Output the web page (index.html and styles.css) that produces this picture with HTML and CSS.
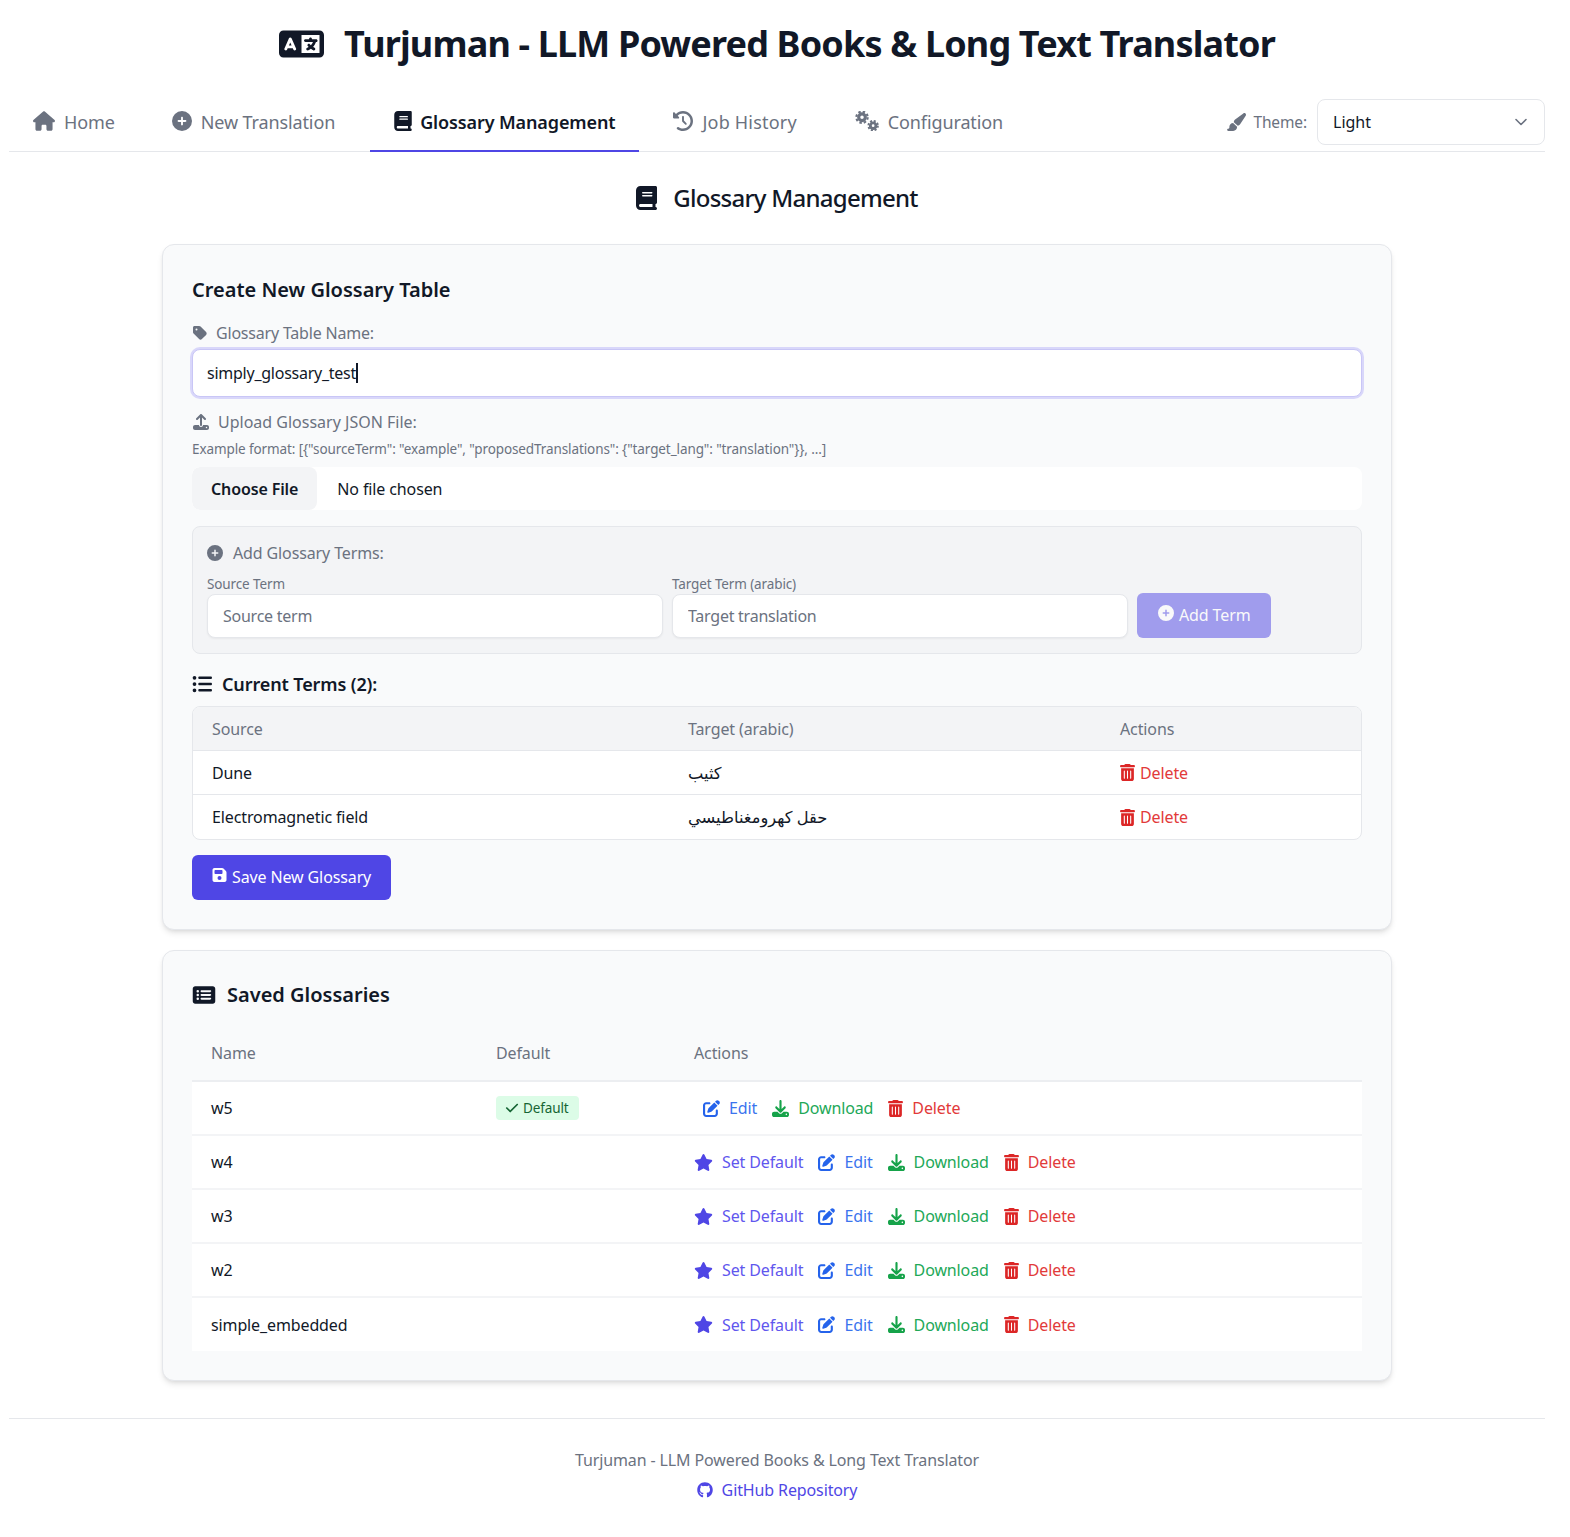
FILE: index.html
```html
<!DOCTYPE html>
<html lang="en">
    <head>
        <meta charset="UTF-8">
        <meta name="viewport" content="width=device-width, initial-scale=1.0">
        <title>Turjuman - LLM Powered Books &amp; Long Text Translator</title>
        <link rel="stylesheet" href="styles.css">
    </head>
    <body>
        <!--Icon sprite-->
        <svg class="sprite" xmlns="http://www.w3.org/2000/svg">
            <symbol id="i-language" viewBox="0 0 640 512"><path d="M0 128C0 92.7 28.7 64 64 64H256h48 16H576c35.3 0 64 28.7 64 64V384c0 35.3-28.7 64-64 64H320 304 256 64c-35.3 0-64-28.7-64-64V128zm320 0V384H576V128H320zM178.3 175.9c-3.2-7.2-10.4-11.9-18.3-11.9s-15.1 4.7-18.3 11.9l-64 144c-4.5 10.1 .1 21.9 10.2 26.4s21.9-.1 26.4-10.2l8.9-20.1h73.6l8.9 20.1c4.5 10.1 16.3 14.6 26.4 10.2s14.6-16.3 10.2-26.4l-64-144zM160 233.2L179 276H141l19-42.8zM448 164c11 0 20 9 20 20v4h44 16c11 0 20 9 20 20s-9 20-20 20h-2l-1.6 4.5c-8.9 24.4-22.4 46.6-39.6 65.4c.9 .6 1.8 1.1 2.7 1.6l18.9 11.3c9.5 5.7 12.5 18 6.9 27.4s-18 12.5-27.4 6.9l-18.9-11.3c-4.5-2.7-8.8-5.5-13.1-8.5c-10.6 7.5-21.9 14-34 19.4l-3.6 1.6c-10.1 4.5-21.9-.1-26.4-10.2s.1-21.9 10.2-26.4l3.6-1.6c6.4-2.9 12.6-6.1 18.5-9.8l-12.2-12.2c-7.8-7.8-7.8-20.5 0-28.3s20.5-7.8 28.3 0l14.6 14.6 .5 .5c12.4-13.1 22.5-28.3 29.8-45H448 376c-11 0-20-9-20-20s9-20 20-20h52v-4c0-11 9-20 20-20z"/></symbol>
            <symbol id="i-house" viewBox="0 0 576 512"><path d="M575.8 255.5c0 18-15 32.1-32 32.1h-32l.7 160.2c0 2.7-.2 5.4-.5 8.1V472c0 22.1-17.9 40-40 40H456c-1.1 0-2.2 0-3.3-.1c-1.4 .1-2.8 .1-4.2 .1H416 392c-22.1 0-40-17.9-40-40V448 384c0-17.7-14.3-32-32-32H256c-17.7 0-32 14.3-32 32v64 24c0 22.1-17.9 40-40 40H160 128.1c-1.5 0-3-.1-4.5-.2c-1.2 .1-2.4 .2-3.6 .2H104c-22.1 0-40-17.9-40-40V360c0-.9 0-1.9 .1-2.8V287.6H32c-18 0-32-14-32-32.1c0-9 3-17 10-24L266.4 8c7-7 15-8 22-8s15 2 21 7L564.8 231.5c8 7 12 15 11 24z"/></symbol>
            <symbol id="i-plus" viewBox="0 0 512 512"><path d="M256 512A256 256 0 1 0 256 0a256 256 0 1 0 0 512zM232 344V280H168c-13.3 0-24-10.7-24-24s10.7-24 24-24h64V168c0-13.3 10.7-24 24-24s24 10.7 24 24v64h64c13.3 0 24 10.7 24 24s-10.7 24-24 24H280v64c0 13.3-10.7 24-24 24s-24-10.7-24-24z"/></symbol>
            <symbol id="i-book" viewBox="0 0 448 512"><path d="M96 0C43 0 0 43 0 96V416c0 53 43 96 96 96H384h32c17.7 0 32-14.3 32-32s-14.3-32-32-32V384c17.7 0 32-14.3 32-32V32c0-17.7-14.3-32-32-32H384 96zm0 384H352v64H96c-17.7 0-32-14.3-32-32s14.3-32 32-32zm32-240c0-8.8 7.2-16 16-16H336c8.8 0 16 7.2 16 16s-7.2 16-16 16H144c-8.8 0-16-7.2-16-16zm16 48H336c8.8 0 16 7.2 16 16s-7.2 16-16 16H144c-8.8 0-16-7.2-16-16s7.2-16 16-16z"/></symbol>
            <symbol id="i-history" viewBox="0 0 512 512"><path d="M75 75L41 41C25.9 25.9 0 36.6 0 57.9V168c0 13.3 10.7 24 24 24H134.1c21.4 0 32.1-25.9 17-41l-30.8-30.8C155 85.5 203 64 256 64c106 0 192 86 192 192s-86 192-192 192c-40.8 0-78.6-12.7-109.7-34.4c-14.5-10.1-34.4-6.6-44.6 7.9s-6.6 34.4 7.9 44.6C151.2 495 201.7 512 256 512c141.4 0 256-114.6 256-256S397.4 0 256 0C185.3 0 121.3 28.7 75 75zm181 53c-13.3 0-24 10.7-24 24V256c0 6.4 2.5 12.5 7 17l72 72c9.4 9.4 24.6 9.4 33.9 0s9.4-24.6 0-33.9l-65-65V152c0-13.3-10.7-24-24-24z"/></symbol>
            <symbol id="i-gears" viewBox="0 0 640 512"><g fill="none" stroke="currentColor"><circle cx="205" cy="160" r="85" stroke-width="80"/><circle cx="205" cy="160" r="145" stroke-width="54" stroke-dasharray="62 52"/><circle cx="490" cy="375" r="72" stroke-width="74"/><circle cx="490" cy="375" r="122" stroke-width="48" stroke-dasharray="52 44"/></g></symbol>
            <symbol id="i-brush" viewBox="0 0 576 512"><path d="M339.3 367.1c27.3-3.9 51.9-19.4 67.2-42.9L568.2 74.1c12.6-19.5 9.4-45.3-7.6-61.2S517.7-4.4 499.1 9.6L262.4 187.2c-24 18-38.2 46.1-38.4 76.1L339.3 367.1zm-19.6 25.4l-116-104.4C143.9 290.3 96 339.6 96 400c0 3.9 .2 7.8 .6 11.6C98.4 429.1 86.4 448 68.8 448H64c-17.7 0-32 14.3-32 32s14.3 32 32 32H208c61.9 0 112-50.1 112-112c0-2.5-.1-5-.2-7.5z"/></symbol>
            <symbol id="i-tag" viewBox="0 0 448 512"><path d="M0 80V229.5c0 17 6.7 33.3 18.7 45.3l176 176c25 25 65.5 25 90.5 0L418.7 317.3c25-25 25-65.5 0-90.5l-176-176c-12-12-28.3-18.7-45.3-18.7H48C21.5 32 0 53.5 0 80zm112 32a32 32 0 1 1 0 64 32 32 0 1 1 0-64z"/></symbol>
            <symbol id="i-upload" viewBox="0 0 512 512"><path d="M288 109.3V352c0 17.7-14.3 32-32 32s-32-14.3-32-32V109.3l-73.4 73.4c-12.5 12.5-32.8 12.5-45.3 0s-12.5-32.8 0-45.3l128-128c12.5-12.5 32.8-12.5 45.3 0l128 128c12.5 12.5 12.5 32.8 0 45.3s-32.8 12.5-45.3 0L288 109.3zM64 352H192c0 35.3 28.7 64 64 64s64-28.7 64-64H448c35.3 0 64 28.7 64 64v32c0 35.3-28.7 64-64 64H64c-35.3 0-64-28.7-64-64V416c0-35.3 28.7-64 64-64zM432 456a24 24 0 1 0 0-48 24 24 0 1 0 0 48z"/></symbol>
            <symbol id="i-download" viewBox="0 0 512 512"><path d="M288 32c0-17.7-14.3-32-32-32s-32 14.3-32 32V274.7l-73.4-73.4c-12.5-12.5-32.8-12.5-45.3 0s-12.5 32.8 0 45.3l128 128c12.5 12.5 32.8 12.5 45.3 0l128-128c12.5-12.5 12.5-32.8 0-45.3s-32.8-12.5-45.3 0L288 274.7V32zM64 352c-35.3 0-64 28.7-64 64v32c0 35.3 28.7 64 64 64H448c35.3 0 64-28.7 64-64V416c0-35.3-28.7-64-64-64H346.5l-45.3 45.3c-25 25-65.5 25-90.5 0L165.5 352H64zm368 56a24 24 0 1 1 0 48 24 24 0 1 1 0-48z"/></symbol>
            <symbol id="i-list" viewBox="0 0 512 512"><path d="M64 144a48 48 0 1 0 0-96 48 48 0 1 0 0 96zM192 64c-17.7 0-32 14.3-32 32s14.3 32 32 32H480c17.7 0 32-14.3 32-32s-14.3-32-32-32H192zm0 160c-17.7 0-32 14.3-32 32s14.3 32 32 32H480c17.7 0 32-14.3 32-32s-14.3-32-32-32H192zm0 160c-17.7 0-32 14.3-32 32s14.3 32 32 32H480c17.7 0 32-14.3 32-32s-14.3-32-32-32H192zM64 464a48 48 0 1 0 0-96 48 48 0 1 0 0 96zm48-208a48 48 0 1 0 -96 0 48 48 0 1 0 96 0z"/></symbol>
            <symbol id="i-rect-list" viewBox="0 0 576 512"><path d="M0 96C0 60.7 28.7 32 64 32H512c35.3 0 64 28.7 64 64V416c0 35.3-28.7 64-64 64H64c-35.3 0-64-28.7-64-64V96zM128 288a32 32 0 1 0 0-64 32 32 0 1 0 0 64zm32-128a32 32 0 1 0 -64 0 32 32 0 1 0 64 0zM128 384a32 32 0 1 0 0-64 32 32 0 1 0 0 64zm96-248c-13.3 0-24 10.7-24 24s10.7 24 24 24H448c13.3 0 24-10.7 24-24s-10.7-24-24-24H224zm0 96c-13.3 0-24 10.7-24 24s10.7 24 24 24H448c13.3 0 24-10.7 24-24s-10.7-24-24-24H224zm0 96c-13.3 0-24 10.7-24 24s10.7 24 24 24H448c13.3 0 24-10.7 24-24s-10.7-24-24-24H224z"/></symbol>
            <symbol id="i-trash" viewBox="0 0 448 512"><path d="M135.2 17.7C140.6 6.8 151.7 0 163.8 0H284.2c12.1 0 23.2 6.8 28.6 17.7L320 32h96c17.7 0 32 14.3 32 32s-14.3 32-32 32H32C14.3 96 0 81.7 0 64S14.3 32 32 32h96l7.2-14.3zM32 128H416V448c0 35.3-28.7 64-64 64H96c-35.3 0-64-28.7-64-64V128zm96 64c-8.8 0-16 7.2-16 16V432c0 8.8 7.2 16 16 16s16-7.2 16-16V208c0-8.8-7.2-16-16-16zm96 0c-8.8 0-16 7.2-16 16V432c0 8.8 7.2 16 16 16s16-7.2 16-16V208c0-8.8-7.2-16-16-16zm96 0c-8.8 0-16 7.2-16 16V432c0 8.8 7.2 16 16 16s16-7.2 16-16V208c0-8.8-7.2-16-16-16z"/></symbol>
            <symbol id="i-edit" viewBox="0 0 512 512"><path d="M471.6 21.7c-21.9-21.9-57.3-21.9-79.2 0L362.3 51.7l97.9 97.9 30.1-30.1c21.9-21.9 21.9-57.3 0-79.2L471.6 21.7zm-299.2 220c-6.1 6.1-10.8 13.6-13.5 21.9l-29.6 88.8c-2.9 8.6-.6 18.1 5.8 24.6s15.9 8.7 24.6 5.8l88.8-29.6c8.2-2.7 15.7-7.4 21.9-13.5L437.7 172.3 339.7 74.3 172.4 241.7zM96 64C43 64 0 107 0 160V416c0 53 43 96 96 96H352c53 0 96-43 96-96V320c0-17.7-14.3-32-32-32s-32 14.3-32 32v96c0 17.7-14.3 32-32 32H96c-17.7 0-32-14.3-32-32V160c0-17.7 14.3-32 32-32h96c17.7 0 32-14.3 32-32s-14.3-32-32-32H96z"/></symbol>
            <symbol id="i-save" viewBox="0 0 448 512"><path d="M64 32C28.7 32 0 60.7 0 96V416c0 35.3 28.7 64 64 64H384c35.3 0 64-28.7 64-64V173.3c0-17-6.7-33.3-18.7-45.3L352 50.7C340 38.7 323.7 32 306.7 32H64zm0 96c0-17.7 14.3-32 32-32H288c17.7 0 32 14.3 32 32v64c0 17.7-14.3 32-32 32H96c-17.7 0-32-14.3-32-32V128zM224 288a64 64 0 1 1 0 128 64 64 0 1 1 0-128z"/></symbol>
            <symbol id="i-check" viewBox="0 0 448 512"><path d="M438.6 105.4c12.5 12.5 12.5 32.8 0 45.3l-256 256c-12.5 12.5-32.8 12.5-45.3 0l-128-128c-12.5-12.5-12.5-32.8 0-45.3s32.8-12.5 45.3 0L160 338.7 393.4 105.4c12.5-12.5 32.8-12.5 45.3 0z"/></symbol>
            <symbol id="i-star" viewBox="0 0 576 512"><path d="M316.9 18C311.6 7 300.4 0 288.1 0s-23.4 7-28.8 18L195 150.3 51.4 171.5c-12 1.8-22 10.2-25.7 21.7s-.7 24.2 7.9 32.7L137.8 329 113.2 474.7c-2 12 3 24.2 12.9 31.3s23 8 33.8 2.3l128.3-68.5 128.3 68.5c10.8 5.7 23.9 4.9 33.8-2.3s14.9-19.3 12.9-31.3L438.5 329 542.7 225.9c8.6-8.5 11.7-21.2 7.9-32.7s-13.7-19.9-25.7-21.7L381.2 150.3 316.9 18z"/></symbol>
            <symbol id="i-github" viewBox="0 0 496 512"><path d="M165.9 397.4c0 2-2.3 3.6-5.2 3.6-3.3 0-5.6-1.6-5.6-3.6 0-2 2.3-3.6 5.2-3.6 3-.3 5.6 1.3 5.6 3.6zm-31.1-4.5c-.7 2 1.3 4.3 4.3 4.9 2.6 1 5.6 0 6.2-2s-1.3-4.3-4.3-5.2c-2.6-.7-5.5.3-6.2 2.3zm44.2-1.7c-2.9.7-4.9 2.6-4.6 4.9.3 2 2.9 3.3 5.9 2.6 2.9-.7 4.9-2.6 4.6-4.6-.3-1.9-3-3.2-5.9-2.9zM244.8 8C106.1 8 0 113.3 0 252c0 110.9 69.8 205.8 169.5 239.2 12.8 2.3 17.3-5.6 17.3-12.1 0-6.2-.3-40.4-.3-61.4 0 0-70 15-84.7-29.8 0 0-11.4-29.1-27.8-36.6 0 0-22.9-15.7 1.6-15.4 0 0 24.9 2 38.6 25.8 21.9 38.6 58.6 27.5 72.9 20.9 2.3-16 8.8-27.1 16-33.7-55.9-6.2-112.3-14.3-112.3-110.5 0-27.5 7.6-41.3 23.6-58.9-2.6-6.5-11.1-33.3 2.6-67.9 20.9-6.5 69 27 69 27 20-5.6 41.5-8.5 62.8-8.5s42.8 2.9 62.8 8.5c0 0 48.1-33.6 69-27 13.7 34.7 5.2 61.4 2.6 67.9 16 17.7 25.8 31.5 25.8 58.9 0 96.5-58.9 104.2-114.8 110.5 9.2 7.9 17 22.9 17 46.4 0 33.7-.3 75.4-.3 83.6 0 6.5 4.6 14.4 17.3 12.1C428.2 457.8 496 362.9 496 252 496 113.3 383.5 8 244.8 8z"/></symbol>
        </svg>

        <header class="pageHeader">
            <h1 class="pageTitle"><svg class="icoTitle"><use href="#i-language"/></svg>Turjuman - LLM Powered Books &amp; Long Text Translator</h1>
        </header>

        <!--Tabs-->
        <nav class="tabs">
            <a class="tab"><svg class="tabIco tabIcoHouse"><use href="#i-house"/></svg>Home</a>
            <a class="tab"><svg class="tabIco"><use href="#i-plus"/></svg>New Translation</a>
            <a class="tab tabActive"><svg class="tabIco tabIcoBook"><use href="#i-book"/></svg>Glossary Management</a>
            <a class="tab tabJob"><svg class="tabIco"><use href="#i-history"/></svg>Job History</a>
            <a class="tab"><svg class="tabIco tabIcoGears"><use href="#i-gears"/></svg>Configuration</a>
            <div class="themeBox">
                <svg class="ico"><use href="#i-brush"/></svg>
                <label class="themeLabel" for="idTheme">Theme:</label>
                <div class="selectWrap">
                    <select class="themeSelect" id="idTheme">
                        <option>Light</option>
                        <option>Dark</option>
                    </select>
                    <svg class="selectArrow" viewBox="0 0 20 20"><path d="M5 7.5l5 5 5-5" fill="none" stroke="#6b7280" stroke-width="1.6" stroke-linecap="round" stroke-linejoin="round"/></svg>
                </div>
            </div>
        </nav>

        <main class="main">
            <h2 class="sectionTitle"><svg class="icoSection"><use href="#i-book"/></svg>Glossary Management</h2>

            <section class="card cardCreate">
                <h3 class="cardTitle">Create New Glossary Table</h3>

                <label class="fieldLabel fieldLabelName"><svg class="ico"><use href="#i-tag"/></svg>Glossary Table Name:</label>
                <div class="textFocus"><span>simply_glossary_test</span><span class="caret"></span></div>

                <label class="fieldLabel fieldLabelUpload"><svg class="ico"><use href="#i-upload"/></svg>Upload Glossary JSON File:</label>
                <p class="hint">Example format: [{"sourceTerm": "example", "proposedTranslations": {"target_lang": "translation"}}, ...]</p>
                <input class="fileInput" type="file">

                <div class="addBox">
                    <div class="fieldLabel addLabel"><svg class="ico"><use href="#i-plus"/></svg>Add Glossary Terms:</div>
                    <div class="addRow">
                        <div class="addCol">
                            <label class="smallLabel">Source Term</label>
                            <input class="textInput" type="text" placeholder="Source term">
                        </div>
                        <div class="addCol">
                            <label class="smallLabel">Target Term (arabic)</label>
                            <input class="textInput" type="text" placeholder="Target translation">
                        </div>
                        <button class="btnAdd" type="button"><svg class="ico"><use href="#i-plus"/></svg>Add Term</button>
                    </div>
                </div>

                <h4 class="termsTitle"><svg class="icoTerms"><use href="#i-list"/></svg>Current Terms (2):</h4>
                <table class="termsTable">
                    <thead>
                        <tr><th class="colSource">Source</th><th class="colTarget">Target (arabic)</th><th>Actions</th></tr>
                    </thead>
                    <tbody>
                        <tr>
                            <td>Dune</td>
                            <td class="arabic" dir="rtl">كثيب</td>
                            <td><a class="act actRed actTight"><svg class="ico"><use href="#i-trash"/></svg>Delete</a></td>
                        </tr>
                        <tr>
                            <td>Electromagnetic field</td>
                            <td class="arabic" dir="rtl">حقل كهرومغناطيسي</td>
                            <td><a class="act actRed actTight"><svg class="ico"><use href="#i-trash"/></svg>Delete</a></td>
                        </tr>
                    </tbody>
                </table>

                <button class="btnSave" type="button"><svg class="ico"><use href="#i-save"/></svg>Save New Glossary</button>
            </section>

            <section class="card cardSaved">
                <h3 class="savedTitle"><svg class="icoSaved"><use href="#i-rect-list"/></svg>Saved Glossaries</h3>
                <table class="savedTable">
                    <thead>
                        <tr><th class="colName">Name</th><th class="colDefault">Default</th><th>Actions</th></tr>
                    </thead>
                    <tbody>
                        <tr>
                            <td>w5</td>
                            <td><span class="badge"><svg class="icoBadge"><use href="#i-check"/></svg>Default</span></td>
                            <td><div class="actions actionsFirst">
                                <a class="act actBlue"><svg class="ico"><use href="#i-edit"/></svg>Edit</a>
                                <a class="act actGreen"><svg class="ico"><use href="#i-download"/></svg>Download</a>
                                <a class="act actRed"><svg class="ico"><use href="#i-trash"/></svg>Delete</a>
                            </div></td>
                        </tr>
                        <tr>
                            <td>w4</td>
                            <td></td>
                            <td><div class="actions">
                                <a class="act actIndigo"><svg class="ico"><use href="#i-star"/></svg>Set Default</a>
                                <a class="act actBlue"><svg class="ico"><use href="#i-edit"/></svg>Edit</a>
                                <a class="act actGreen"><svg class="ico"><use href="#i-download"/></svg>Download</a>
                                <a class="act actRed"><svg class="ico"><use href="#i-trash"/></svg>Delete</a>
                            </div></td>
                        </tr>
                        <tr>
                            <td>w3</td>
                            <td></td>
                            <td><div class="actions">
                                <a class="act actIndigo"><svg class="ico"><use href="#i-star"/></svg>Set Default</a>
                                <a class="act actBlue"><svg class="ico"><use href="#i-edit"/></svg>Edit</a>
                                <a class="act actGreen"><svg class="ico"><use href="#i-download"/></svg>Download</a>
                                <a class="act actRed"><svg class="ico"><use href="#i-trash"/></svg>Delete</a>
                            </div></td>
                        </tr>
                        <tr>
                            <td>w2</td>
                            <td></td>
                            <td><div class="actions">
                                <a class="act actIndigo"><svg class="ico"><use href="#i-star"/></svg>Set Default</a>
                                <a class="act actBlue"><svg class="ico"><use href="#i-edit"/></svg>Edit</a>
                                <a class="act actGreen"><svg class="ico"><use href="#i-download"/></svg>Download</a>
                                <a class="act actRed"><svg class="ico"><use href="#i-trash"/></svg>Delete</a>
                            </div></td>
                        </tr>
                        <tr>
                            <td>simple_embedded</td>
                            <td></td>
                            <td><div class="actions">
                                <a class="act actIndigo"><svg class="ico"><use href="#i-star"/></svg>Set Default</a>
                                <a class="act actBlue"><svg class="ico"><use href="#i-edit"/></svg>Edit</a>
                                <a class="act actGreen"><svg class="ico"><use href="#i-download"/></svg>Download</a>
                                <a class="act actRed"><svg class="ico"><use href="#i-trash"/></svg>Delete</a>
                            </div></td>
                        </tr>
                    </tbody>
                </table>
            </section>
        </main>

        <footer class="footer">
            <p>Turjuman - LLM Powered Books &amp; Long Text Translator</p>
            <a class="footerLink"><svg class="ico"><use href="#i-github"/></svg>GitHub Repository</a>
        </footer>
    </body>
</html>
```

FILE: styles.css
```css
/*Reset*/
html,
body,
h1,
h2,
h3,
h4,
p {
    margin: 0;
    padding: 0;
}

*, *::before, *::after {
    box-sizing: border-box;
}

table {
    border-collapse: separate;
    border-spacing: 0;
}

/*Page*/
body {
    padding: 0 25px 0 9px;
    background: #ffffff;
    color: #111827;
    font-family: "Noto Sans", "DejaVu Sans", sans-serif;
    font-size: 16px;
    line-height: 24px;
    letter-spacing: -0.12px;
}

.sprite {
    display: none;
}

.ico {
    width: 16px;
    height: 16px;
    fill: currentColor;
    flex: none;
}

/*Header*/
.pageHeader {
    padding-top: 20px;
    text-align: center;
}

.pageTitle {
    display: flex;
    justify-content: center;
    align-items: center;
    height: 48px;
    font-size: 36px;
    line-height: 48px;
    font-weight: 700;
    letter-spacing: -0.84px;
}

.icoTitle {
    width: 45px;
    height: 36px;
    margin-right: 20px;
    fill: currentColor;
}

/*Tabs*/
.tabs {
    display: flex;
    align-items: flex-end;
    height: 84px;
    padding-top: 31px;
    border-bottom: 1px solid #e5e7eb;
}

.tab {
    display: flex;
    align-items: center;
    height: 54px;
    margin-bottom: -1px;
    margin-right: 9px;
    padding: 0 24px 4px;
    color: #6b7280;
    font-size: 18px;
    border-bottom: 2px solid transparent;
}

.tabIco {
    width: 20px;
    height: 20px;
    margin-right: 9px;
    margin-top: -3px;
    fill: currentColor;
}

.tabIcoHouse {
    width: 22px;
}

.tabIcoBook {
    width: 18px;
    margin-right: 8px;
}

.tabIcoGears {
    width: 25px;
}

.tabActive {
    margin-left: 2px;
    margin-right: 10px;
    color: #111827;
    font-weight: 600;
    border-bottom-color: #4f46e5;
}

.tabJob {
    letter-spacing: 0.2px;
}

.themeBox {
    display: flex;
    align-items: center;
    height: 46px;
    margin-left: auto;
    margin-bottom: 6px;
    color: #6b7280;
}

.themeBox .ico {
    width: 20px;
    height: 18px;
}

.themeLabel {
    margin: 0 10px 0 7px;
    font-size: 15.5px;
}

.selectWrap {
    position: relative;
}

.themeSelect {
    appearance: none;
    display: block;
    width: 228px;
    height: 46px;
    padding: 0 15px;
    background: #ffffff;
    border: 1px solid #e5e7eb;
    border-radius: 8px;
    color: #111827;
    font: inherit;
}

.selectArrow {
    position: absolute;
    right: 14px;
    top: 13px;
    width: 20px;
    height: 20px;
}

/*Main*/
.main {
    width: 1230px;
    margin: 0 auto;
}

.sectionTitle {
    display: flex;
    justify-content: center;
    align-items: center;
    height: 32px;
    margin-top: 30px;
    font-size: 24px;
    line-height: 32px;
    font-weight: 500;
    letter-spacing: -0.75px;
}

.icoSection {
    width: 21px;
    height: 24px;
    margin-right: 16px;
    fill: currentColor;
}

.card {
    background: #f9fafb;
    border: 1px solid #e5e7eb;
    border-radius: 12px;
    box-shadow: 0 4px 6px -1px rgba(0, 0, 0, 0.1), 0 2px 4px -2px rgba(0, 0, 0, 0.1);
    padding: 29px;
}

.cardCreate {
    height: 686px;
    margin-top: 30px;
}

.cardSaved {
    height: 431px;
    margin-top: 20px;
}

.cardTitle {
    font-size: 20px;
    line-height: 32px;
    font-weight: 600;
    letter-spacing: 0;
}

/*Form*/
.fieldLabel {
    display: flex;
    align-items: center;
    margin-top: 16px;
    color: #6b7280;
}

.fieldLabel .ico {
    margin-right: 8px;
}

.fieldLabelName {
    margin-top: 15px;
    letter-spacing: -0.2px;
}

.textFocus {
    display: flex;
    align-items: center;
    height: 48px;
    margin-top: 4px;
    padding: 0 14px;
    background: #ffffff;
    border: 1px solid #c9c6f6;
    border-radius: 8px;
    box-shadow: 0 0 0 2px #d9d7fa;
    letter-spacing: -0.25px;
}

.caret {
    display: inline-block;
    width: 2px;
    height: 20px;
    background: #111827;
}

.fieldLabelUpload {
    margin-top: 13px;
    letter-spacing: 0;
}

.fieldLabelUpload .ico {
    width: 18px;
}

.hint {
    margin-top: 5px;
    color: #6b7280;
    font-size: 13.5px;
    line-height: 20px;
    letter-spacing: -0.1px;
}

.fileInput {
    display: block;
    width: 100%;
    height: 43px;
    margin-top: 8px;
    background: #ffffff;
    border-radius: 8px;
    color: #111827;
    font: inherit;
    letter-spacing: inherit;
}

.fileInput::file-selector-button {
    height: 43px;
    margin-right: 20px;
    padding: 0 19px;
    background: #f3f4f6;
    border: 0;
    border-radius: 8px;
    color: #111827;
    font: inherit;
    font-weight: 600;
    letter-spacing: inherit;
}

.addBox {
    height: 128px;
    margin-top: 16px;
    padding: 14px;
    background: #f3f4f6;
    border: 1px solid #e5e7eb;
    border-radius: 8px;
}

.addLabel {
    margin-top: 0;
}

.addLabel .ico {
    margin-right: 10px;
}

.addRow {
    display: flex;
    align-items: flex-end;
    gap: 9.5px;
    margin-top: 9px;
}

.addCol {
    width: 455.5px;
}

.smallLabel {
    display: block;
    color: #6b7280;
    font-size: 13.5px;
    line-height: 20px;
}

.textInput {
    display: block;
    width: 100%;
    height: 44px;
    padding: 0 15px;
    background: #ffffff;
    border: 1px solid #e5e7eb;
    border-radius: 8px;
    box-shadow: 0 1px 2px rgba(0, 0, 0, 0.05);
    color: #111827;
    font: inherit;
    letter-spacing: -0.25px;
}

.textInput::placeholder {
    color: #6b7280;
}

.btnAdd,
.btnSave {
    display: flex;
    align-items: center;
    height: 45px;
    padding: 0 20px 2px;
    border: 0;
    border-radius: 6px;
    color: #ffffff;
    font: inherit;
    letter-spacing: inherit;
    background: #4f46e5;
}

.btnAdd {
    padding: 0 21px 2px;
    opacity: 0.5;
}

.btnAdd .ico,
.btnSave .ico {
    margin-right: 5px;
    margin-top: -4px;
}

.btnSave .ico {
    width: 15px;
}

.termsTitle {
    display: flex;
    align-items: center;
    margin-top: 18px;
    font-size: 18px;
    line-height: 24px;
    font-weight: 600;
}

.icoTerms {
    width: 20px;
    height: 20px;
    margin-right: 10px;
    fill: currentColor;
}

/*Tables*/
.termsTable,
.savedTable {
    width: 100%;
    table-layout: fixed;
}

.termsTable {
    margin-top: 10px;
    background: #ffffff;
    border: 1px solid #e5e7eb;
    border-radius: 8px;
    overflow: hidden;
}

.termsTable th,
.savedTable th {
    color: #6b7280;
    font-weight: 400;
    text-align: left;
}

.termsTable th {
    height: 44px;
    padding: 0 19px;
    background: #f3f4f6;
    border-bottom: 1px solid #e5e7eb;
}

.termsTable td {
    height: 44px;
    padding: 0 19px;
    border-bottom: 1px solid #e5e7eb;
}

.termsTable tbody tr:last-child td {
    border-bottom: 0;
}

.termsTable .act {
    display: flex;
}

.termsTable td.arabic {
    direction: ltr;
    text-align: left;
    letter-spacing: 0;
    font-size: 16.3px;
}

.colSource {
    width: 476px;
}

.colTarget {
    width: 432px;
}

.btnSave {
    margin-top: 15px;
}

.savedTitle {
    display: flex;
    align-items: center;
    margin-top: -1px;
    font-size: 20px;
    line-height: 32px;
    font-weight: 600;
    letter-spacing: 0;
}

.icoSaved {
    width: 24px;
    height: 20px;
    margin-right: 11px;
    fill: currentColor;
}

.savedTable {
    margin-top: 17px;
}

.savedTable th {
    height: 54px;
    padding: 0 19px 2px;
    border-bottom: 2px solid #eceef1;
}

.savedTable td {
    height: 54px;
    padding: 0 19px;
    background: #ffffff;
    border-bottom: 2px solid #f3f4f6;
}

.savedTable tbody tr:last-child td {
    height: 53px;
    border-bottom: 0;
}

.colName {
    width: 285px;
}

.colDefault {
    width: 198px;
}

.badge {
    display: inline-flex;
    align-items: center;
    height: 24px;
    padding: 0 10px 0 9px;
    background: #dcfce7;
    border-radius: 4px;
    color: #166534;
    font-size: 13.5px;
}

.icoBadge {
    width: 14px;
    height: 14px;
    margin-right: 4px;
    fill: currentColor;
}

.actions {
    display: flex;
    align-items: center;
    gap: 15px;
}

.actionsFirst {
    padding-left: 9px;
}

.act {
    display: inline-flex;
    align-items: center;
}

.act .ico {
    width: 17px;
    height: 17px;
    margin-right: 9px;
}

.actIndigo .ico {
    width: 19px;
    color: #4f46e5;
}

.actBlue .ico {
    color: #2563eb;
}

.actGreen .ico {
    color: #16a34a;
}

.actRed .ico {
    width: 15px;
    color: #dc2626;
}

.actTight .ico {
    margin-right: 5px;
}

/*Text is lighter than the icon beside it*/
.actIndigo {
    color: #5f57ee;
}

.actBlue {
    color: #3b74ee;
}

.actGreen {
    color: #22a858;
}

.actRed {
    color: #e23a3a;
}

/*Footer*/
.footer {
    margin-top: 37px;
    padding-top: 26px;
    border-top: 1px solid #e5e7eb;
    color: #6b7280;
    text-align: center;
    line-height: 30px;
}

.footerLink {
    display: inline-flex;
    align-items: center;
    color: #4f46e5;
}

.footerLink .ico {
    margin-right: 9px;
}
```
